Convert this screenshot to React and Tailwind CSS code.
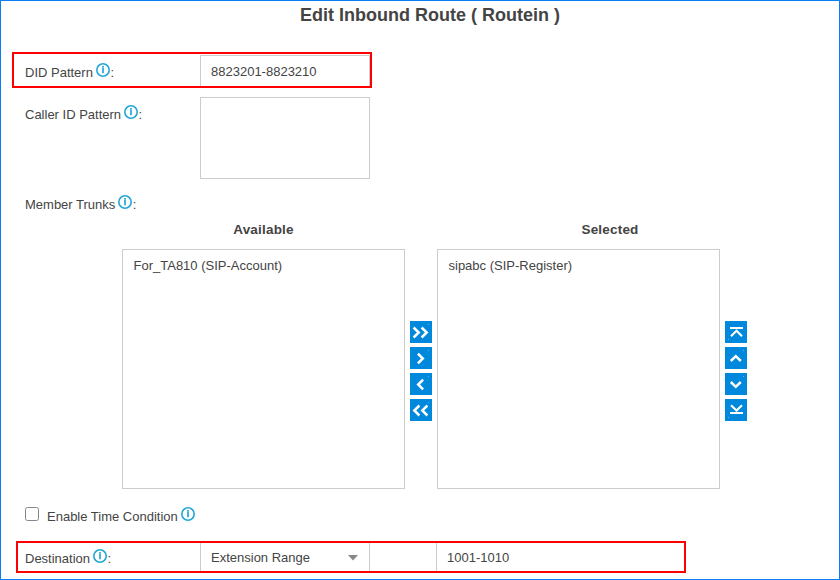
import React from "react";

function Info() {
  return (
    <svg className="mb-[6px] ml-[3px] h-[14px] w-[14px] shrink-0" viewBox="0 0 14 14" fill="none">
      <circle cx="7" cy="7" r="6.2" stroke="#22a7d6" strokeWidth="1.6" />
      <path d="M7 3v1.4M7 4.8v5.4" stroke="#22a7d6" strokeWidth="1.7" />
    </svg>
  );
}

function Label({ children, colon = true }) {
  return (
    <div className="flex h-[20px] items-center leading-[18px]">
      <span>{children}</span>
      <Info />
      {colon && <span className="ml-[0.5px]">:</span>}
    </div>
  );
}

function MoveButton({ d, bar, dot }) {
  return (
    <button className="block h-[22px] w-[22px] bg-[#0089dc]">
      <svg className="block" width="22" height="22" viewBox="0 0 22 22" fill="none">
        {bar && <rect x="5" y={bar} width="13" height="2" fill="#fff" />}
        <path d={d} stroke="#fff" strokeWidth={bar ? 2.1 : 2.5} />
        <rect x={dot[0]} y={dot[1]} width="1" height="1" fill="#58b3e9" />
      </svg>
    </button>
  );
}

const transfer = [
  { d: "M3.6 6.5 8.7 11.5l-5.1 5M11.6 6.5 16.7 11.5l-5.1 5", dot: [18, 3] },
  { d: "M7.9 6.7 12.8 11.5l-4.9 4.8", dot: [18, 3] },
  { d: "M13.1 6.7 8.2 11.5l4.9 4.8", dot: [18, 3] },
  { d: "M9.4 6.5 4.3 11.5l5.1 5M17.4 6.5 12.3 11.5l5.1 5", dot: [18, 3] },
];

const order = [
  { d: "M6 15.2l5.5-5.4 5.5 5.4", bar: 6, dot: [3, 18] },
  { d: "M5.8 14 10.8 9.2l5 4.8", dot: [18, 3] },
  { d: "M5.8 9 10.8 13.8l5-4.8", dot: [18, 3] },
  { d: "M6 6.2l5.5 5.4 5.5-5.4", bar: 13, dot: [3, 18] },
];

function Buttons({ items }) {
  return (
    <div className="mt-[91px] ml-[5px] flex w-[22px] flex-col gap-1">
      {items.map((item) => (
        <MoveButton key={item.d} {...item} />
      ))}
    </div>
  );
}

function TrunkList({ title, item, inset = "" }) {
  return (
    <div className="w-[283px]">
      <h2 className={`h-[29px] pt-px text-center text-[13.5px] leading-[18px] font-bold tracking-[0.2px] ${inset}`}>{title}</h2>
      <div className="h-[240px] border border-[#cccccc] px-[10.5px] pt-[7px] leading-[18px]">{item}</div>
    </div>
  );
}

export default function App() {
  return (
    <main className="h-[580px] w-[840px] overflow-hidden border border-[#0a7ff5] bg-white font-['Liberation_Sans',Arial,sans-serif] text-[13px] text-[#444444]">
      <h1 className="h-[51px] pt-[2px] pl-[20px] text-center text-[18px] leading-6 font-bold">
        Edit Inbound Route ( Routein )
      </h1>

      <div className="ml-[11px] flex h-[36px] w-[360px] border-2 border-[#ff0000] pt-px">
        <div className="w-[186px] pt-[8px] pl-[11px]"><Label>DID Pattern</Label></div>
        <div className="w-[170px] border border-b-0 border-[#cccccc] pt-[7px] pl-[10px] leading-[18px]">8823201-8823210</div>
      </div>

      <div className="mt-[9px] ml-[24px] flex h-[82px]">
        <div className="w-[175px] pt-[8px]"><Label>Caller ID Pattern</Label></div>
        <div className="h-[82px] w-[170px] border border-[#cccccc]" />
      </div>

      <div className="mt-[16px] ml-[24px]"><Label>Member Trunks</Label></div>

      <div className="mt-[5px] ml-[121px] flex h-[269px]">
        <TrunkList title="Available" item="For_TA810 (SIP-Account)" />
        <div className="mr-[5px] pt-[10px]"><Buttons items={transfer} /></div>
        <TrunkList title="Selected" item="sipabc (SIP-Register)" inset="pl-[63px]" />
        <div className="pt-[10px]"><Buttons items={order} /></div>
      </div>

      <div className="mt-[18px] ml-[24px] flex h-[18px]">
        <div className="h-[14px] w-[14px] rounded-[2.5px] border border-[#85858d]" />
        <div className="ml-[8px]"><Label colon={false}>Enable Time Condition</Label></div>
      </div>

      <div className="mt-[16px] ml-[15px] flex h-[32px] w-[670px] border-2 border-[#ff0000]">
        <div className="w-[182px] pt-[6px] pl-[7px]"><Label>Destination</Label></div>
        <div className="flex w-[170px] items-start justify-between border-x border-[#cccccc] pt-[6px] pr-[11px] pl-[10px] leading-[18px]">
          <span>Extension Range</span>
          <svg className="mt-[6px]" width="10" height="6" viewBox="0 0 10 6"><path d="M0 0h10L5 5.5z" fill="#888" /></svg>
        </div>
        <div className="ml-[66px] flex-1 border-l border-[#cccccc] pt-[6px] pl-[10px] leading-[18px]">1001-1010</div>
      </div>
    </main>
  );
}
